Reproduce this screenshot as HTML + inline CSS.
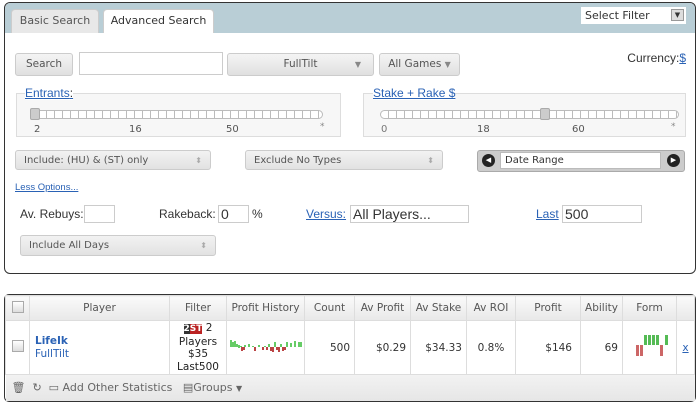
<!DOCTYPE html>
<html><head><style>
*{box-sizing:border-box;margin:0;padding:0}
body{width:700px;height:407px;background:#fff;font-family:"DejaVu Sans","Liberation Sans",sans-serif;font-size:11px;color:#333;position:relative;overflow:hidden}
.a{position:absolute}
.panel{left:4px;top:2px;width:692px;height:272px;border:1px solid #333;border-radius:6px;overflow:hidden}
.hdr{left:0;top:0;width:100%;height:30px;background:#b9ced6}
.tab{top:6px;height:24px;border:1px solid #ccc;border-bottom:none;border-radius:4px 4px 0 0;font-size:11px;line-height:22px;text-align:center}
.btn{background:linear-gradient(#f4f4f4,#e0e0e0);border:1px solid #ccc;border-radius:3px;color:#555;font-size:10.5px;text-align:center}
.inp{background:#fff;border:1px solid #ccc}
.box{border:1px solid #ddd;background:#f7f7f7}
.lnk{color:#2a62b5;text-decoration:underline;font-family:"Liberation Sans",sans-serif}
.ar{font-family:"Liberation Sans",sans-serif;font-size:12px;color:#333}
.track{height:9px;border:1px solid #bbb;border-radius:5px;background:repeating-linear-gradient(90deg,#fff 0 7px,#bbb 7px 8px)}
.sel{background:linear-gradient(#f2f2f2,#e2e2e2);border:1px solid #ccc;border-radius:3px;color:#555;font-size:10px;line-height:19px;padding-left:8px}
.sel:after{content:"⬍";position:absolute;right:8px;top:0;color:#aaa;font-size:8px}
table{border-collapse:collapse;position:absolute;left:5px;top:295px;width:690px;font-size:10.5px}
td,th{border:1px solid #ddd;text-align:center}
th{background:linear-gradient(#fafafa,#e8e8e8);font-weight:normal;color:#555;height:25px}
.tbl{left:4px;top:294px;width:692px;height:108px;border:1px solid #333;border-radius:5px}
.cb{display:inline-block;width:12px;height:12px;border:1px solid #aaa;background:linear-gradient(#fff,#ddd)}
</style></head><body>
<div class="a panel">
 <div class="a hdr"></div>
 <div class="a tab" style="left:6px;width:88px;background:#e8e8e8;color:#555">Basic Search</div>
 <div class="a tab" style="left:98px;width:111px;background:#fff;color:#333">Advanced Search</div>
 <div class="a" style="left:576px;top:4px;width:105px;height:17px;background:#fff;font-size:11px;line-height:17px;padding-left:4px">Select Filter<span class="a" style="right:2px;top:2px;width:13px;height:12px;background:#ddd;border:1px solid #999;font-size:7px;line-height:10px;text-align:center">▼</span></div>
</div>
<div class="a btn" style="left:15px;top:53px;width:58px;height:23px;line-height:21px">Search</div>
<div class="a inp" style="left:79px;top:52px;width:144px;height:23px"></div>
<div class="a btn" style="left:227px;top:53px;width:147px;height:23px;line-height:21px">FullTilt<span class="a" style="right:12px;top:0;font-size:8px;color:#888">▼</span></div>
<div class="a btn" style="left:379px;top:53px;width:81px;height:23px;line-height:21px">All Games <span style="font-size:8px;color:#888">▼</span></div>
<div class="a ar" style="right:14px;top:51px;font-size:12px">Currency:<span class="lnk">$</span></div>

<div class="a box" style="left:16px;top:93px;width:325px;height:44px"></div>
<div class="a lnk" style="left:25px;top:86px;font-size:12px;background:#fff">Entrants<span style="color:#333;text-decoration:none">:</span></div>
<div class="a track" style="left:30px;top:110px;width:293px"></div>
<div class="a" style="left:30px;top:108px;width:10px;height:12px;background:#ccc;border:1px solid #aaa;border-radius:2px"></div>
<div class="a" style="left:34px;top:124px;font-size:10px;color:#555">2</div>
<div class="a" style="left:129px;top:124px;font-size:10px;color:#555">16</div>
<div class="a" style="left:226px;top:124px;font-size:10px;color:#555">50</div>
<div class="a" style="left:320px;top:122px;font-size:9px;color:#888">*</div>

<div class="a box" style="left:363px;top:93px;width:323px;height:44px"></div>
<div class="a lnk" style="left:373px;top:86px;font-size:12px;background:#fff">Stake + Rake $</div>
<div class="a track" style="left:380px;top:110px;width:299px"></div>
<div class="a" style="left:540px;top:108px;width:10px;height:12px;background:#ccc;border:1px solid #aaa;border-radius:2px"></div>
<div class="a" style="left:381px;top:124px;font-size:10px;color:#777">0</div>
<div class="a" style="left:477px;top:124px;font-size:10px;color:#555">18</div>
<div class="a" style="left:572px;top:124px;font-size:10px;color:#555">60</div>
<div class="a" style="left:671px;top:122px;font-size:9px;color:#888">*</div>

<div class="a sel" style="left:15px;top:150px;width:196px;height:20px">Include: (HU) &amp; (ST) only</div>
<div class="a sel" style="left:245px;top:150px;width:198px;height:20px">Exclude No Types</div>
<div class="a" style="left:477px;top:150px;width:208px;height:22px;background:#ccc;border:1px solid #aaa;border-radius:3px"></div>
<div class="a" style="left:482px;top:154px;width:13px;height:13px;border-radius:50%;background:#222;color:#fff;font-size:7px;line-height:13px;text-align:center">◀</div>
<div class="a" style="left:500px;top:152px;width:161px;height:17px;background:#fff;border:1px solid #bbb;font-size:10px;line-height:15px;padding-left:4px">Date Range</div>
<div class="a" style="left:667px;top:154px;width:13px;height:13px;border-radius:50%;background:#222;color:#fff;font-size:7px;line-height:13px;text-align:center">▶</div>

<div class="a lnk" style="left:15px;top:182px;font-size:9.5px">Less Options...</div>
<div class="a ar" style="left:20px;top:207px">Av. Rebuys:</div>
<div class="a inp" style="left:84px;top:205px;width:31px;height:18px"></div>
<div class="a ar" style="left:159px;top:207px">Rakeback:</div>
<div class="a inp ar" style="left:218px;top:205px;width:31px;height:18px;padding-left:2px;line-height:16px;font-size:14px">0</div>
<div class="a ar" style="left:252px;top:207px">%</div>
<div class="a lnk" style="left:306px;top:207px;font-size:12px">Versus:</div>
<div class="a inp ar" style="left:350px;top:205px;width:119px;height:18px;padding-left:2px;line-height:16px;font-size:14px">All Players...</div>
<div class="a lnk" style="left:536px;top:207px;font-size:12px">Last</div>
<div class="a inp ar" style="left:562px;top:205px;width:80px;height:18px;padding-left:2px;line-height:16px;font-size:14px">500</div>
<div class="a sel" style="left:20px;top:235px;width:196px;height:21px;line-height:20px">Include All Days</div>

<div class="a tbl"></div>
<table>
<tr><th style="width:24px"><span class="cb"></span></th><th style="width:140px">Player</th><th style="width:57px">Filter</th><th style="width:78px">Profit History</th><th style="width:50px">Count</th><th style="width:56px">Av Profit</th><th style="width:56px">Av Stake</th><th style="width:49px">Av ROI</th><th style="width:65px">Profit</th><th style="width:42px">Ability</th><th style="width:54px">Form</th><th></th></tr>
<tr style="height:54px"><td><span class="cb"></span></td>
<td style="text-align:left;padding-left:5px;color:#2a62b5;line-height:13px"><b>LifeIk</b><br>FullTilt</td>
<td style="line-height:12.5px;color:#222"><span style="background:#333;color:#fff;font-weight:bold;font-size:9px">2</span><span style="background:#b22;color:#fff;font-weight:bold;font-size:9px">ST</span> 2<br>Players<br>$35<br>Last500</td>
<td><svg width="74" height="20" viewBox="0 0 74 20"><path d="M2 4v7M4 6v5M6 5v6M8 8v3M10 9v3M12 10v1M16 9v2M20 8v3M24 10v1M30 9v2M36 10v1M40 8v3M46 6v5M52 8v3M58 6v5M62 7v4M66 5v6M70 6v5M72 6v5" stroke="#6c6" stroke-width="2"/><path d="M13 11v4M15 11v3M26 11v4M34 11v3M38 11v3M42 11v4M44 11v5M48 11v3M50 11v5M54 11v4M56 11v3" stroke="#b44" stroke-width="2"/></svg></td>
<td style="text-align:right;padding-right:4px">500</td><td style="text-align:right;padding-right:4px">$0.29</td><td style="text-align:right;padding-right:4px">$34.33</td><td>0.8%</td><td style="text-align:right;padding-right:8px">$146</td><td style="text-align:right;padding-right:4px">69</td>
<td><svg width="40" height="26" viewBox="0 0 40 26"><g fill="#c66"><rect x="6" y="12" width="3" height="11"/><rect x="10" y="12" width="3" height="11"/><rect x="30" y="12" width="3" height="11"/></g><g fill="#5b5"><rect x="14" y="2" width="3" height="10"/><rect x="18" y="2" width="3" height="10"/><rect x="22" y="2" width="3" height="10"/><rect x="26" y="2" width="3" height="10"/><rect x="35" y="2" width="3" height="10"/></g></svg></td>
<td style="color:#2a62b5;text-decoration:underline">x</td></tr>
<tr style="height:26px;background:linear-gradient(#f2f2f2,#e6e6e6)"><td colspan="12" style="text-align:left;padding-left:6px;color:#666;font-size:11px;border:none">🗑 &nbsp;↻ &nbsp;▭ Add Other Statistics &nbsp; ▤Groups <span style="font-size:8px">▼</span></td></tr>
</table>
</body></html>
